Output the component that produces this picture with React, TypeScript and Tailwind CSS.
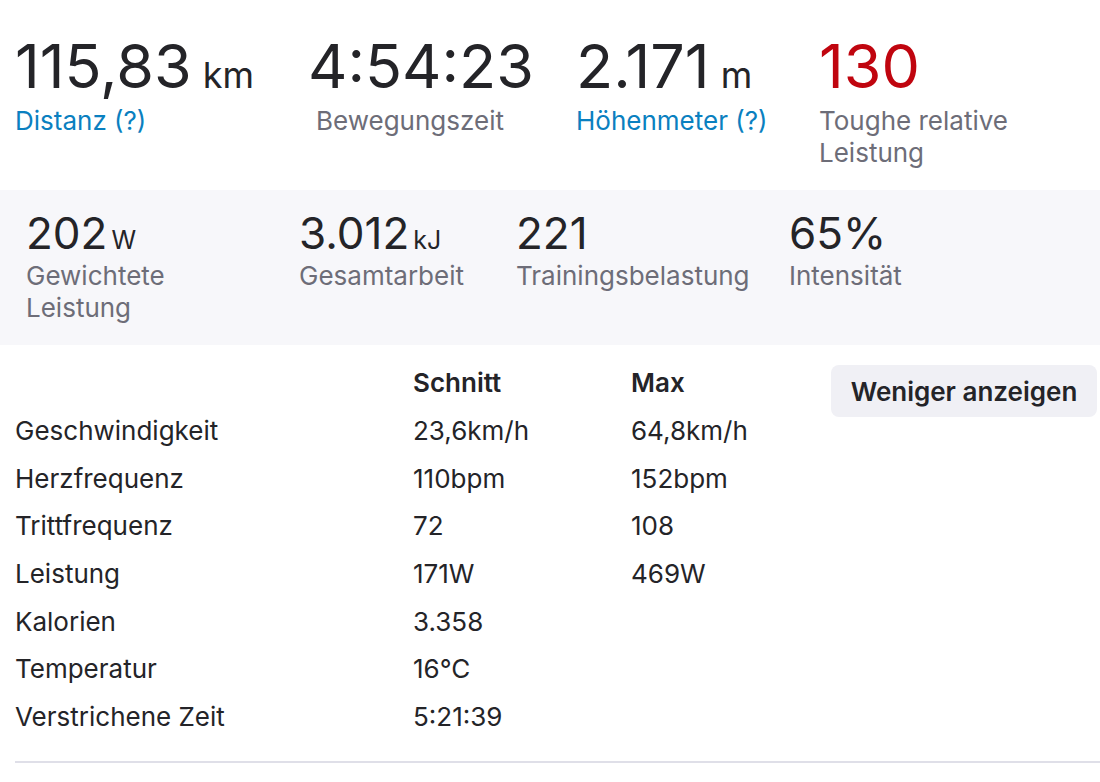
import React from "react";

const font = { fontFamily: "Inter, 'Noto Sans', sans-serif" };

type Primary = { value: string; unit?: string; label: string; tone?: "link" | "red"; width: string; labelShift?: boolean };

const primary: Primary[] = [
  { value: "115,83", unit: "km", label: "Distanz (?)", tone: "link", width: "w-[293px]" },
  { value: "4:54:23", label: "Bewegungszeit", width: "w-[268px]", labelShift: true },
  { value: "2.171", unit: "m", label: "Höhenmeter (?)", tone: "link", width: "w-[243px]" },
  { value: "130", label: "Toughe relative Leistung", tone: "red", width: "flex-1" },
];

const secondary = [
  { value: "202", unit: "W", label: "Gewichtete Leistung", width: "w-[273px] pr-[30px]" },
  { value: "3.012", unit: "kJ", label: "Gesamtarbeit", width: "w-[217px] pr-[20px]" },
  { value: "221", label: "Trainingsbelastung", width: "w-[273px] pr-[20px]" },
  { value: "65%", label: "Intensität", width: "flex-1" },
];

const rows: [string, string, string][] = [
  ["Geschwindigkeit", "23,6km/h", "64,8km/h"],
  ["Herzfrequenz", "110bpm", "152bpm"],
  ["Trittfrequenz", "72", "108"],
  ["Leistung", "171W", "469W"],
  ["Kalorien", "3.358", ""],
  ["Temperatur", "16℃", ""],
  ["Verstrichene Zeit", "5:21:39", ""],
];

export default function App() {
  return (
    <div className="min-h-[782px] w-[1100px] bg-white text-[#242428]" style={font}>
      <ul className="flex pl-[15px] pt-[34px] pb-[21px]">
        {primary.map((s) => (
          <li key={s.label} className={s.width}>
            <div className={`flex items-baseline text-[61px] leading-[64px] ${s.tone === "red" ? "text-[#c0050f]" : "text-[#242428]"}`}>
              <span>{s.value}</span>
              {s.unit ? <span className="ml-[11px] text-[36px] leading-none">{s.unit}</span> : null}
            </div>
            <div
              className={`mt-[7px] pr-4 text-[26px] leading-[32px] ${s.tone === "link" ? "text-[#0a80c0]" : "text-[#6d6d78]"} ${s.labelShift ? "ml-[8px]" : ""}`}
            >
              {s.label}
            </div>
          </li>
        ))}
      </ul>

      <ul className="flex bg-[#f7f7fa] pl-[26px] pt-[19px] pb-[21px]">
        {secondary.map((s) => (
          <li key={s.label} className={s.width}>
            <div className="flex items-baseline text-[44px] leading-[48px]">
              <span>{s.value}</span>
              {s.unit ? <span className="ml-[4px] text-[25px] leading-none">{s.unit}</span> : null}
            </div>
            <div className="mt-[3px] text-[26px] leading-[32px] text-[#6d6d78]">{s.label}</div>
          </li>
        ))}
      </ul>

      <div className="flex pl-[15px] pt-[14px]">
        <table className="w-[816px] border-collapse text-left text-[26px]">
          <thead>
            <tr className="h-[47.7px]">
              <th className="w-[398px] p-0" />
              <th className="w-[218px] p-0 font-semibold">Schnitt</th>
              <th className="p-0 font-semibold">Max</th>
            </tr>
          </thead>
          <tbody>
            {rows.map(([label, avg, max]) => (
              <tr key={label} className="h-[47.7px]">
                <td className="p-0">{label}</td>
                <td className="p-0">{avg}</td>
                <td className="p-0">{max}</td>
              </tr>
            ))}
          </tbody>
        </table>
        <div className="pt-[6px]">
          <button
            type="button"
            className="h-[52px] w-[266px] rounded-[8px] bg-[#f0f0f5] text-[26px] font-semibold text-[#242428]"
          >
            Weniger anzeigen
          </button>
        </div>
      </div>

      <div className="ml-[15px] mt-[20px] h-[2px] bg-[#dfdfe8]" />
    </div>
  );
}
